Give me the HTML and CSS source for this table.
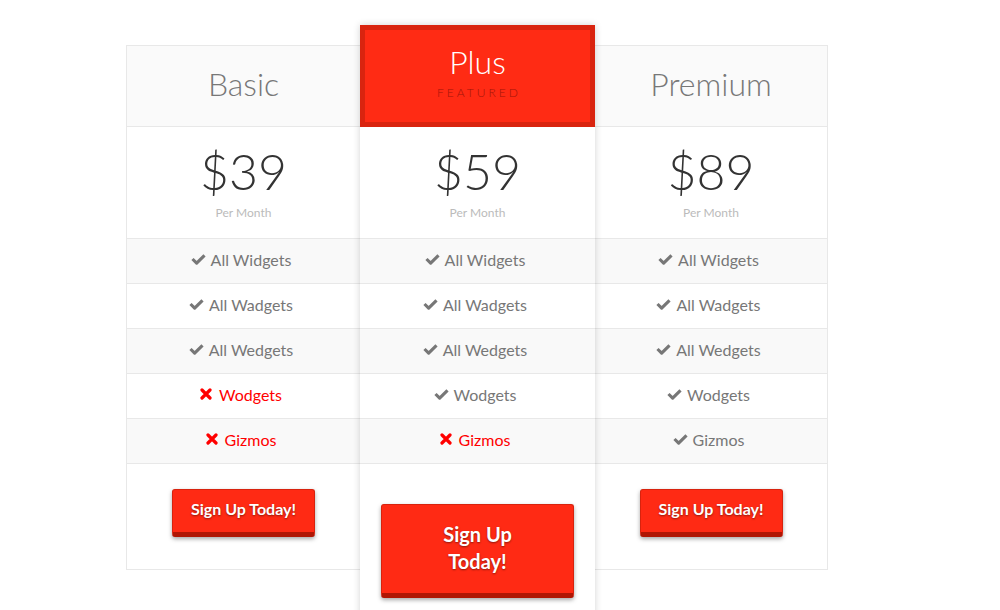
FILE: index.html
```html
<!DOCTYPE html>
<html>
<head>
<meta charset="utf-8">
<link rel="stylesheet" href="styles.css">
</head>
<body>
<svg width="0" height="0" class="defs">
  <defs>
    <symbol id="ok" viewBox="0 0 16 13"><path d="M1.5 6.5 L6 11 L14.5 2.5" fill="none" stroke="currentColor" stroke-width="3.4" stroke-linejoin="round"/></symbol>
    <symbol id="no" viewBox="0 0 12 12"><path d="M2 2 L10 10 M10 2 L2 10" fill="none" stroke="currentColor" stroke-width="3.2" stroke-linecap="round"/></symbol>
  </defs>
</svg>
<div class="table">
  <div class="plan">
    <div class="head"><h2 class="name">Basic</h2></div>
    <div class="price"><div class="amount">$39</div><div class="per">Per Month</div></div>
    <ul class="features">
      <li><svg class="ico"><use href="#ok"/></svg>All Widgets</li>
      <li><svg class="ico"><use href="#ok"/></svg>All Wadgets</li>
      <li><svg class="ico"><use href="#ok"/></svg>All Wedgets</li>
      <li class="off"><svg class="ico x"><use href="#no"/></svg>Wodgets</li>
      <li class="off"><svg class="ico x"><use href="#no"/></svg>Gizmos</li>
    </ul>
    <div class="foot"><a class="btn">Sign Up Today!</a></div>
  </div>
  <div class="plan featured">
    <div class="head"><h2 class="name">Plus</h2><div class="tag">FEATURED</div></div>
    <div class="price"><div class="amount">$59</div><div class="per">Per Month</div></div>
    <ul class="features">
      <li><svg class="ico"><use href="#ok"/></svg>All Widgets</li>
      <li><svg class="ico"><use href="#ok"/></svg>All Wadgets</li>
      <li><svg class="ico"><use href="#ok"/></svg>All Wedgets</li>
      <li><svg class="ico"><use href="#ok"/></svg>Wodgets</li>
      <li class="off"><svg class="ico x"><use href="#no"/></svg>Gizmos</li>
    </ul>
    <div class="foot"><a class="btn big">Sign Up<br>Today!</a></div>
  </div>
  <div class="plan last">
    <div class="head"><h2 class="name">Premium</h2></div>
    <div class="price"><div class="amount">$89</div><div class="per">Per Month</div></div>
    <ul class="features">
      <li><svg class="ico"><use href="#ok"/></svg>All Widgets</li>
      <li><svg class="ico"><use href="#ok"/></svg>All Wadgets</li>
      <li><svg class="ico"><use href="#ok"/></svg>All Wedgets</li>
      <li><svg class="ico"><use href="#ok"/></svg>Wodgets</li>
      <li><svg class="ico"><use href="#ok"/></svg>Gizmos</li>
    </ul>
    <div class="foot"><a class="btn">Sign Up Today!</a></div>
  </div>
</div>
</body>
</html>
```

FILE: styles.css
```css
html, body {
  margin: 0;
  padding: 0;
  background: #fff;
  font-family: Lato, "Open Sans", "Liberation Sans", sans-serif;
  overflow: hidden;
  height: 610px;
}
.defs { position: absolute; }
.table {
  display: flex;
  align-items: flex-start;
  padding: 25px 0 0 126px;
}
.plan {
  box-sizing: border-box;
  width: 235px;
  margin-top: 20px;
  border: 1px solid #e8e8e8;
  background: #fff;
  text-align: center;
}
.plan.last { width: 234px; margin-left: -1px; }
.head {
  height: 80px;
  background: #fafafa;
  border-bottom: 1px solid #e8e8e8;
  display: flex;
  flex-direction: column;
  align-items: center;
  justify-content: center;
}
.name {
  margin: -4px 0 0;
  font-weight: 300;
  font-size: 32px;
  line-height: 36px;
  color: #777;
}
.price {
  height: 112px;
  border-bottom: 1px solid #e8e8e8;
  box-sizing: border-box;
  padding-top: 9px;
}
.amount {
  font-weight: 300;
  font-size: 50px;
  line-height: 70px;
  color: #333;
}
.per {
  font-size: 12px;
  line-height: 14px;
  color: #bbb;
  margin-top: 0;
}
.features {
  list-style: none;
  margin: 0;
  padding: 0;
}
.features li {
  box-sizing: border-box;
  height: 45px;
  padding: 0 5px 4px 0;
  border-bottom: 1px solid #e8e8e8;
  display: flex;
  align-items: center;
  justify-content: center;
  font-size: 16px;
  color: #777;
}
.features li:nth-child(odd) { background: #f9f9f9; }
.features li.off { color: #f00; }
.ico {
  width: 15px;
  height: 12px;
  margin-right: 5px;
  color: #777;
}
.ico.x {
  width: 12px;
  height: 12px;
  margin-right: 7px;
  color: #f00;
}
.foot {
  height: 105px;
  padding-top: 25px;
  box-sizing: border-box;
  display: flex;
  justify-content: center;
  align-items: flex-start;
}
.btn {
  display: inline-block;
  box-sizing: border-box;
  width: 143px;
  height: 48px;
  padding-top: 9px;
  background: #ff2a14;
  border: 1px solid #d8230e;
  border-bottom: 5px solid #b01604;
  border-radius: 3px;
  box-shadow: 0 2px 4px rgba(0,0,0,0.35);
  color: #fff;
  font-weight: 700;
  font-size: 16px;
  line-height: 20px;
  text-shadow: 0 1px 2px rgba(0,0,0,0.45);
}
.featured {
  position: relative;
  z-index: 1;
  margin-top: 0;
  margin-left: -1px;
  border: none;
  box-shadow: 0 0 7px rgba(0,0,0,0.18);
}
.featured .head {
  height: 102px;
  box-sizing: border-box;
  background: #ff2b14;
  border: 5px solid #d9240f;
  justify-content: flex-start;
  padding-top: 14px;
}
.featured .name {
  color: #fff;
  margin: 0;
}
.tag {
  font-size: 12px;
  font-weight: 300;
  letter-spacing: 3px;
  color: #a3150a;
  line-height: 12px;
  margin-top: 7px;
  padding-left: 3px;
}
.featured .foot {
  height: 160px;
  padding-top: 40px;
}
.btn.big {
  width: 193px;
  height: 94px;
  font-size: 20px;
  line-height: 27px;
  padding-top: 16px;
}
```
